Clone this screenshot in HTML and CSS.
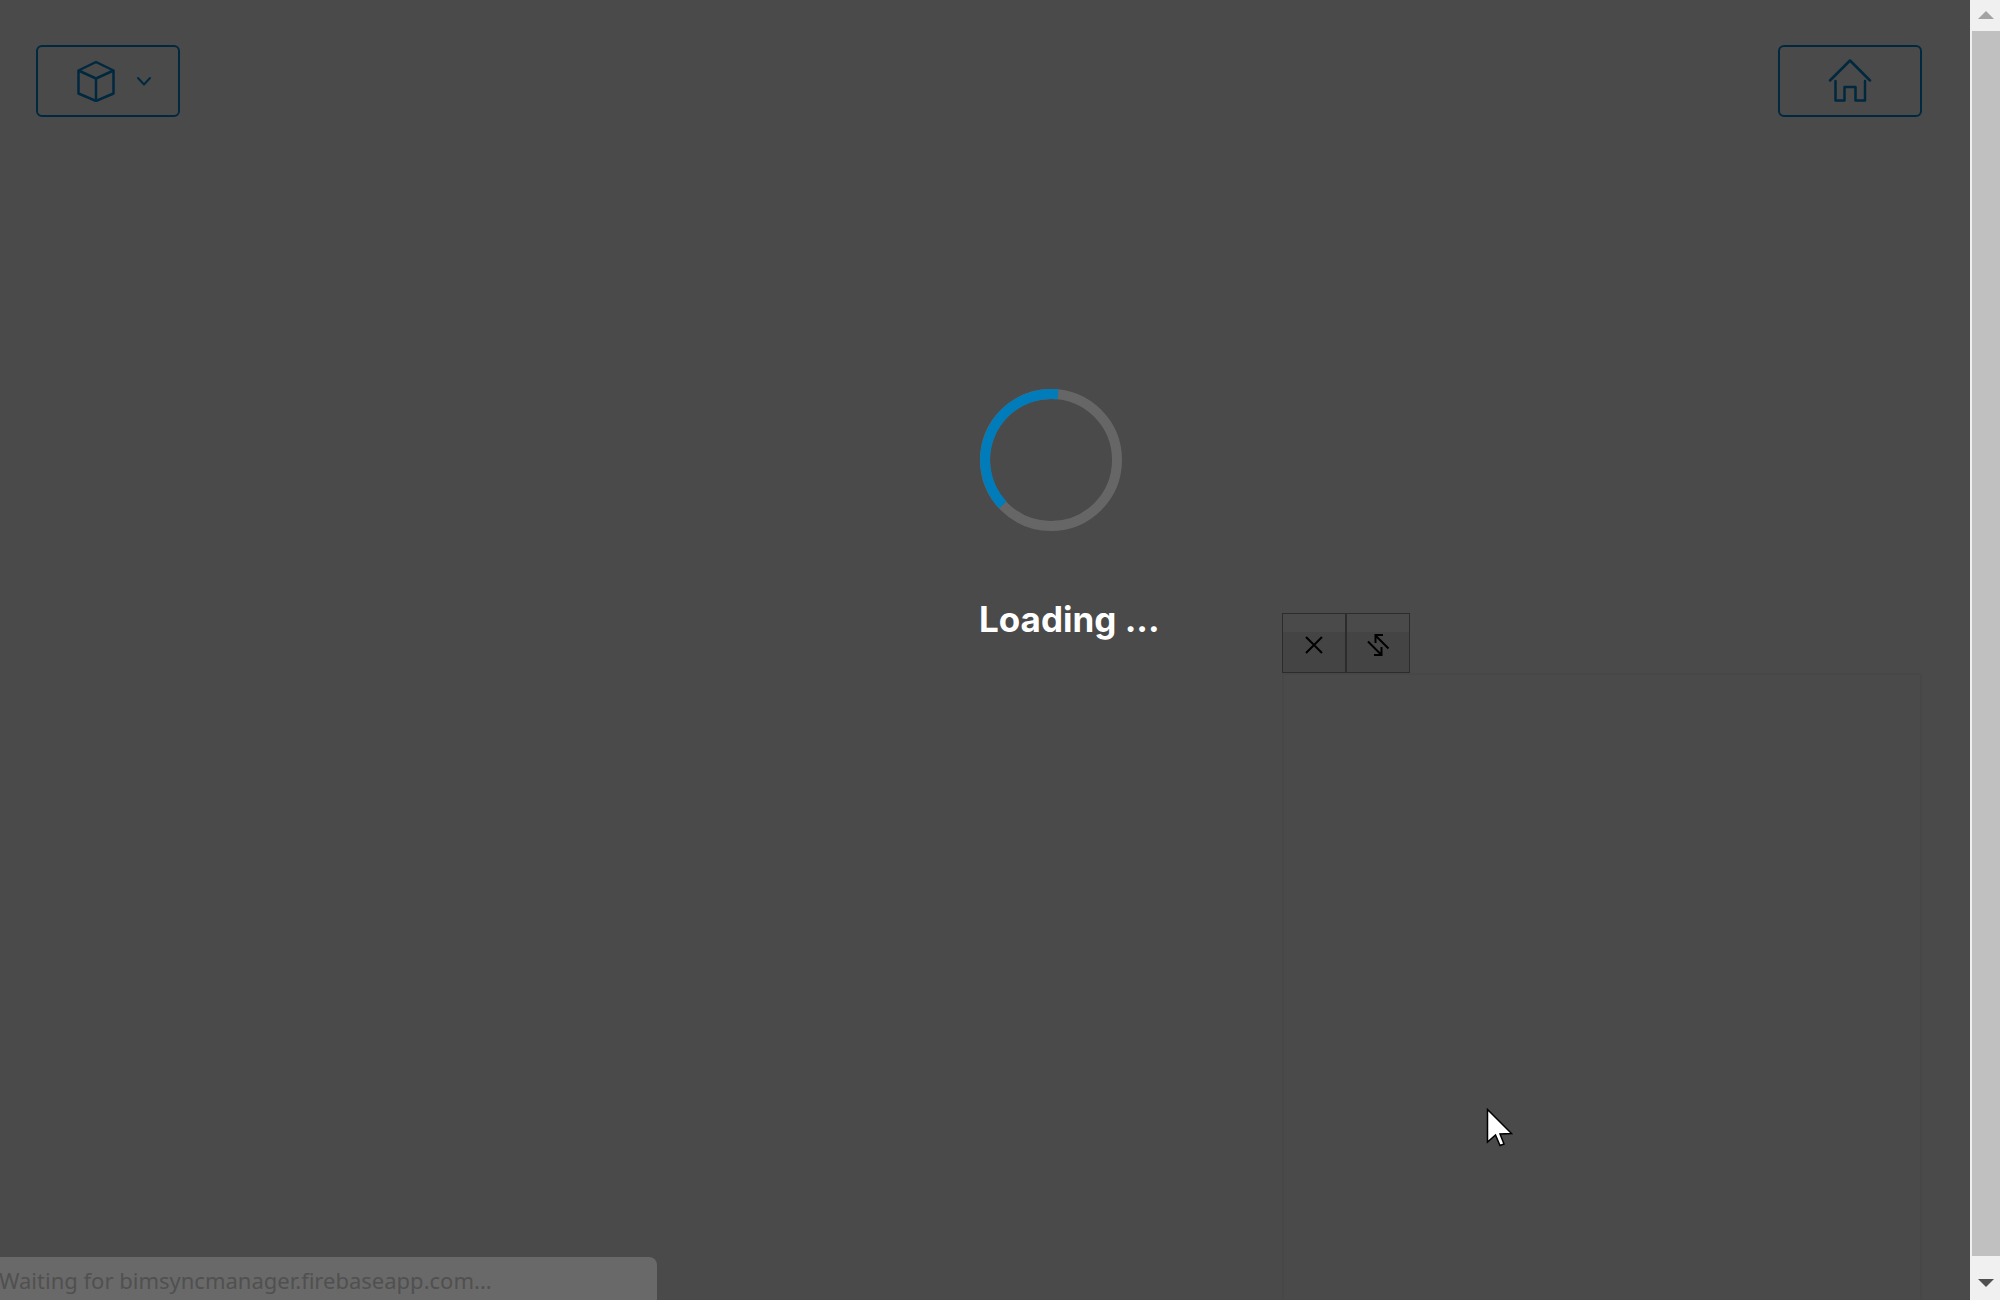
FILE: index.html
```html
<!DOCTYPE html>
<html lang="en">
<head>
<meta charset="utf-8">
<title>Viewer</title>
<link rel="stylesheet" href="styles.css">
</head>
<body>
<main class="viewer">
  <header class="topbar">
    <button class="tool" type="button" aria-label="Models">
      <svg class="cube" viewBox="0 0 40 42"><path d="M20 2 37.500 10.500V33.500L20 41 2.500 33.500V10.500ZM2.500 10.500 20 18.500 37.500 10.500M20 18.500V41"/></svg>
      <svg class="chevron" viewBox="0 0 14 10"><path d="M1 2 7 8.500 13 2"/></svg>
    </button>
    <button class="tool" type="button" aria-label="Home">
      <svg class="home" viewBox="0 0 44 44"><path d="M2 21.500 22 1.500 42 21.500M7.500 22V41.500H16.500V28H27.500V41.500H37V22"/></svg>
    </button>
  </header>
  <section class="panel">
    <div class="panel-tools">
      <button class="panel-button" type="button" aria-label="Close">
        <svg class="panel-icon" viewBox="0 0 24 24"><path d="M4 4 20 20M20 4 4 20"/></svg>
      </button>
      <button class="panel-button" type="button" aria-label="Resize">
        <svg class="panel-icon" viewBox="0 0 24 24"><path d="M22.500 15.500 9.500 2.500M9.500 10V2H17M2 8.500 15.500 22M15.500 14V22H8"/></svg>
      </button>
    </div>
    <div class="panel-body"></div>
  </section>
  <div class="loading" role="status">
    <svg class="spinner" viewBox="0 0 142 142"><circle class="track" cx="71" cy="71" r="66"/><path class="arc" d="M22.800 116A66 66 0 0 1 78 5.400"/></svg>
    <p class="loading-text">Loading ...</p>
  </div>
  <div class="status">Waiting for bimsyncmanager.firebaseapp.com...</div>
  <svg class="cursor" viewBox="0 0 28 40"><path d="M1.500 1.500V34L9.500 27 14 37.500 18 36 14 26 25.500 25.500Z"/></svg>
</main>
<aside class="scrollbar" aria-hidden="true">
  <svg class="scroll-arrow up" viewBox="0 0 16 8"><path d="M0 8 8 0 16 8Z"/></svg>
  <div class="thumb"></div>
  <svg class="scroll-arrow down" viewBox="0 0 16 8"><path d="M0 0H16L8 8Z"/></svg>
</aside>
</body>
</html>
```
FILE: styles.css
```css
* { box-sizing: border-box; }

body {
  margin: 0;
  height: 100vh;
  display: flex;
  overflow: hidden;
  background: #4a4a4a;
  font-family: "Noto Sans", sans-serif;
}

svg { display: block; fill: none; }

.viewer {
  position: relative;
  flex: 1;
  display: flex;
  flex-direction: column;
  overflow: hidden;
}

.topbar {
  display: flex;
  justify-content: space-between;
  padding: 45px 48px 0 36px;
}

.tool {
  display: flex;
  align-items: center;
  justify-content: center;
  gap: 21px;
  width: 144px;
  height: 72px;
  padding: 0;
  border: 2px solid #00293f;
  border-radius: 6px;
  background: none;
  stroke: #00293f;
  stroke-width: 2.5;
  stroke-linecap: round;
  stroke-linejoin: round;
}

.cube { width: 40px; height: 42px; margin-left: 11px; }
.chevron { width: 14px; height: 10px; stroke-width: 2; }
.home { width: 44px; height: 44px; }

.panel {
  width: 640px;
  margin: auto 48px 0 auto;
}

.panel-tools { display: flex; }

.panel-button {
  display: flex;
  align-items: center;
  justify-content: center;
  width: 64px;
  height: 60px;
  padding: 4px 0 0;
  border: 1px solid #2c2c2c;
  border-radius: 0;
  background: linear-gradient(#4a4a4a 18px, #444444 18px);
}

.panel-icon {
  width: 24px;
  height: 24px;
  stroke: #000;
  stroke-width: 2;
}

.panel-body {
  height: 627px;
  border: 2px solid #474747;
  border-bottom: 0;
}

.loading {
  position: absolute;
  top: 389px;
  left: 979px;
}

.spinner { width: 142px; height: 142px; margin-left: 1px; stroke-width: 10; }
.track { stroke: #666; }
.arc { stroke: #007cbb; }

.loading-text {
  margin: 64px 0 0;
  font: 700 35px/48px Inter, sans-serif;
  color: #fff;
  white-space: nowrap;
}

.status {
  position: absolute;
  left: 0;
  bottom: 0;
  width: 657px;
  height: 43px;
  border-radius: 0 8px 0 0;
  background: #696969;
  color: #505050;
  font-size: 22px;
  line-height: 46px;
  text-indent: -1px;
  white-space: nowrap;
}

.cursor {
  position: absolute;
  left: 1486px;
  top: 1108px;
  width: 28px;
  height: 40px;
  fill: #fff;
  stroke: #000;
  stroke-width: 1.5;
}

.scrollbar {
  display: flex;
  flex-direction: column;
  align-items: center;
  width: 30px;
  padding: 11px 0 13px 2px;
  background: #f0f0f0;
}

.thumb {
  flex: 1;
  align-self: stretch;
  margin: 12px 0 23px;
  background: #c0c0c0;
}

.scroll-arrow { width: 16px; height: 8px; }
.up { fill: #a3a3a3; }
.down { fill: #505050; }
```
